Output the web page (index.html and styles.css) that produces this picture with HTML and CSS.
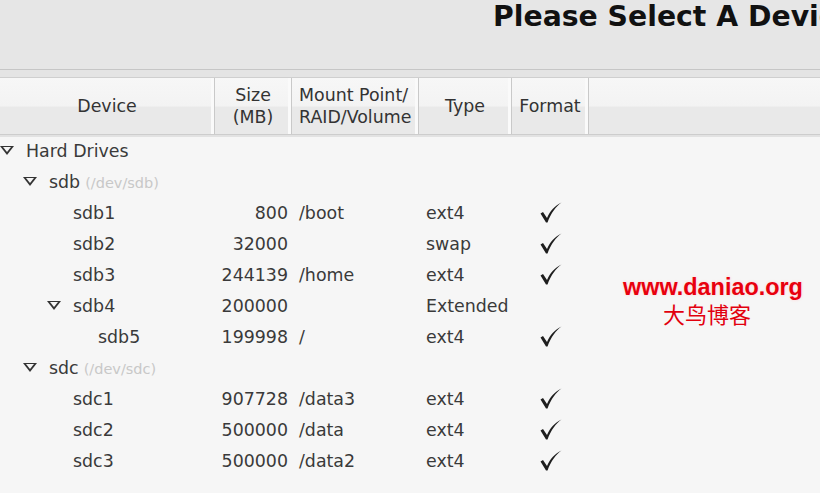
FILE: index.html
```html
<!DOCTYPE html>
<html>
<head>
<meta charset="utf-8">
<link rel="stylesheet" href="styles.css">
</head>
<body>
<div class="page">
  <div class="top">
    <h1 class="title">Please Select A Device</h1>
  </div>
  <div class="rule"></div>
  <div class="header">
    <div class="col c-dev">Device</div>
    <div class="col c-size">Size<br>(MB)</div>
    <div class="col c-mount">Mount Point/<br>RAID/Volume</div>
    <div class="col c-type">Type</div>
    <div class="col c-fmt">Format</div>
    <div class="col c-rest"></div>
  </div>
  <div class="list">
    <div class="row"><div class="name l0"><span class="tri"></span>Hard Drives</div></div>
    <div class="row"><div class="name l1"><span class="tri"></span>sdb<span class="dev">(/dev/sdb)</span></div></div>
    <div class="row"><div class="name l2">sdb1</div><div class="size">800</div><div class="mount">/boot</div><div class="type">ext4</div><div class="fmt"><svg class="check" viewBox="0 0 22 21"><path d="M0.5 11.5 L3 10 L7 16 C10 9 15 3.5 21.5 0.5 C16 4.5 11 11 7.5 20.5 L6 20.5 Z"/></svg></div></div>
    <div class="row"><div class="name l2">sdb2</div><div class="size">32000</div><div class="mount"></div><div class="type">swap</div><div class="fmt"><svg class="check" viewBox="0 0 22 21"><path d="M0.5 11.5 L3 10 L7 16 C10 9 15 3.5 21.5 0.5 C16 4.5 11 11 7.5 20.5 L6 20.5 Z"/></svg></div></div>
    <div class="row"><div class="name l2">sdb3</div><div class="size">244139</div><div class="mount">/home</div><div class="type">ext4</div><div class="fmt"><svg class="check" viewBox="0 0 22 21"><path d="M0.5 11.5 L3 10 L7 16 C10 9 15 3.5 21.5 0.5 C16 4.5 11 11 7.5 20.5 L6 20.5 Z"/></svg></div></div>
    <div class="row"><div class="name l2b"><span class="tri"></span>sdb4</div><div class="size">200000</div><div class="mount"></div><div class="type">Extended</div><div class="fmt"></div></div>
    <div class="row"><div class="name l3">sdb5</div><div class="size">199998</div><div class="mount">/</div><div class="type">ext4</div><div class="fmt"><svg class="check" viewBox="0 0 22 21"><path d="M0.5 11.5 L3 10 L7 16 C10 9 15 3.5 21.5 0.5 C16 4.5 11 11 7.5 20.5 L6 20.5 Z"/></svg></div></div>
    <div class="row"><div class="name l1"><span class="tri"></span>sdc<span class="dev">(/dev/sdc)</span></div></div>
    <div class="row"><div class="name l2">sdc1</div><div class="size">907728</div><div class="mount">/data3</div><div class="type">ext4</div><div class="fmt"><svg class="check" viewBox="0 0 22 21"><path d="M0.5 11.5 L3 10 L7 16 C10 9 15 3.5 21.5 0.5 C16 4.5 11 11 7.5 20.5 L6 20.5 Z"/></svg></div></div>
    <div class="row"><div class="name l2">sdc2</div><div class="size">500000</div><div class="mount">/data</div><div class="type">ext4</div><div class="fmt"><svg class="check" viewBox="0 0 22 21"><path d="M0.5 11.5 L3 10 L7 16 C10 9 15 3.5 21.5 0.5 C16 4.5 11 11 7.5 20.5 L6 20.5 Z"/></svg></div></div>
    <div class="row"><div class="name l2">sdc3</div><div class="size">500000</div><div class="mount">/data2</div><div class="type">ext4</div><div class="fmt"><svg class="check" viewBox="0 0 22 21"><path d="M0.5 11.5 L3 10 L7 16 C10 9 15 3.5 21.5 0.5 C16 4.5 11 11 7.5 20.5 L6 20.5 Z"/></svg></div></div>
  </div>
  <div class="watermark">
    <div class="wm-url">www.daniao.org</div>
    <div class="wm-cn">大鸟博客</div>
  </div>
</div>
</body>
</html>
```

FILE: styles.css
```css
html, body {
  margin: 0;
  padding: 0;
}
body {
  width: 820px;
  height: 493px;
  overflow: hidden;
  background: #f6f6f6;
  font-family: "DejaVu Sans", sans-serif;
  color: #3a3a3a;
}
.page {
  position: relative;
  width: 820px;
  height: 493px;
  overflow: hidden;
}
.top {
  height: 69px;
  background: #e6e6e6;
  padding-left: 493px;
  box-sizing: border-box;
  white-space: nowrap;
  overflow: hidden;
}
.title {
  margin: 0;
  font-family: "DejaVu Sans", sans-serif;
  font-weight: bold;
  font-size: 28.3px;
  line-height: 33px;
  color: #111;
}
.rule {
  height: 7px;
  background: #e4e4e4;
  border-top: 1px solid #c6c6c6;
  border-bottom: 1px solid #cfcfcf;
}
.header {
  display: flex;
  height: 56px;
  background: linear-gradient(#f7f7f7 0%, #f3f3f3 50%, #e9e9e9 52%, #e9e9e9 100%);
  border-bottom: 1px solid #cdcdcd;
  box-shadow: 0 2px 0 #e2e2e2;
  font-size: 17.4px;
  line-height: 22px;
  color: #333;
}
.col {
  display: flex;
  align-items: center;
  justify-content: center;
  text-align: center;
  box-sizing: border-box;
  border-right: 1px solid #c9c9c9;
  box-shadow: inset -3px 0 0 #fafafa;
}
.c-dev { width: 215px; }
.c-size { width: 77px; }
.c-mount { width: 127px; justify-content: flex-start; text-align: left; padding-left: 7px; }
.c-type { width: 93px; }
.c-fmt { width: 77px; }
.c-rest { flex: 1; border-right: none; box-shadow: none; }
.list {
  padding-top: 0;
  font-size: 17.4px;
}
.row {
  display: flex;
  height: 31px;
  align-items: center;
  white-space: nowrap;
}
.name {
  display: flex;
  align-items: center;
  width: 215px;
  box-sizing: border-box;
}
.l0 { padding-left: 0; }
.l1 { padding-left: 23px; }
.l2 { padding-left: 73px; }
.l2b { padding-left: 47px; }
.l3 { padding-left: 98px; }
.tri {
  display: inline-block;
  width: 0;
  height: 0;
  margin-right: 12px;
  position: relative;
  border-left: 7px solid transparent;
  border-right: 7px solid transparent;
  border-top: 9px solid #333;
}
.tri::after {
  content: "";
  position: absolute;
  left: -4px;
  top: -8px;
  border-left: 4px solid transparent;
  border-right: 4px solid transparent;
  border-top: 5px solid #f6f6f6;
}
.dev {
  font-size: 14.5px;
  color: #c8c8c8;
  margin-left: 5px;
  padding-top: 2px;
}
.size {
  width: 73px;
  text-align: right;
}
.mount {
  width: 138px;
  padding-left: 11px;
  box-sizing: border-box;
}
.type {
  width: 114px;
}
.fmt {
  width: 22px;
  height: 21px;
  display: flex;
}
.check {
  width: 22px;
  height: 21px;
  fill: #1e1e1e;
}
.watermark {
  position: absolute;
  left: 618px;
  top: 274px;
  width: 190px;
  text-align: center;
}
.wm-url {
  font-family: "Liberation Sans", Arial, sans-serif;
  font-weight: bold;
  font-size: 23.4px;
  line-height: 27px;
  color: #e8000e;
  text-shadow: 0 0 3px #ffd0d0;
}
.wm-cn {
  font-family: "Noto Sans CJK SC", sans-serif;
  font-size: 22px;
  line-height: 25px;
  color: #e2000e;
  margin-left: -12px;
}
```
